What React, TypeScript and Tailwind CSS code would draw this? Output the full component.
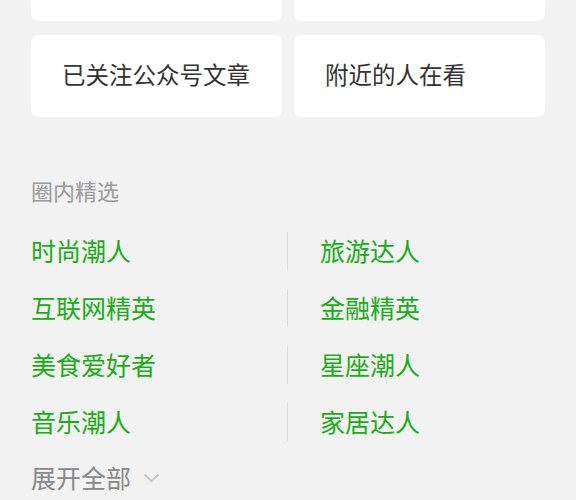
import React from 'react';

const cards = [
  ['', ''],
  ['已关注公众号文章', '附近的人在看'],
];

const circles = [
  ['时尚潮人', '旅游达人'],
  ['互联网精英', '金融精英'],
  ['美食爱好者', '星座潮人'],
  ['音乐潮人', '家居达人'],
];

const App: React.FC = () => {
  return (
    <div
      className="h-[500px] w-[576px] overflow-hidden bg-[#f2f2f2] px-[31px]"
      style={{ fontFamily: '"Noto Sans CJK SC", "Noto Sans", sans-serif' }}
    >
      {/* Cards */}
      <div className="mt-[-61px] flex flex-col gap-[14px]">
        {cards.map((row, i) => (
          <div key={i} className="grid grid-cols-2 gap-[12px]">
            {row.map((label, j) => (
              <div
                key={j}
                className="flex h-[82px] items-center rounded-[7px] bg-white pb-[3px] pl-[31px] text-[23.5px] text-[#333]"
              >
                {label}
              </div>
            ))}
          </div>
        ))}
      </div>

      {/* Section title */}
      <div className="mt-[58px] h-[30px] text-[22px] leading-[30px] text-[#999]">圈内精选</div>

      {/* Circle list */}
      <div className="mt-[17px] flex flex-col">
        {circles.map(([left, right]) => (
          <div key={left} className="flex h-[57px] items-center">
            <div className="w-[256px] text-[25px] text-[#1aad19]">{left}</div>
            <div className="h-[38px] w-px bg-[#dcdcdc]" />
            <div className="pl-[32px] text-[25px] text-[#1aad19]">{right}</div>
          </div>
        ))}
      </div>

      {/* Expand */}
      <div className="mt-[12px] flex h-[32px] items-center gap-[12px] text-[25px] text-[#888]">
        <span>展开全部</span>
        <svg width="17" height="10" viewBox="0 0 17 10" fill="none">
          <path d="M1.5 1.5 L8.5 8 L15.5 1.5" stroke="#c8c8c8" strokeWidth="2.2" />
        </svg>
      </div>
    </div>
  );
};

export default App;
